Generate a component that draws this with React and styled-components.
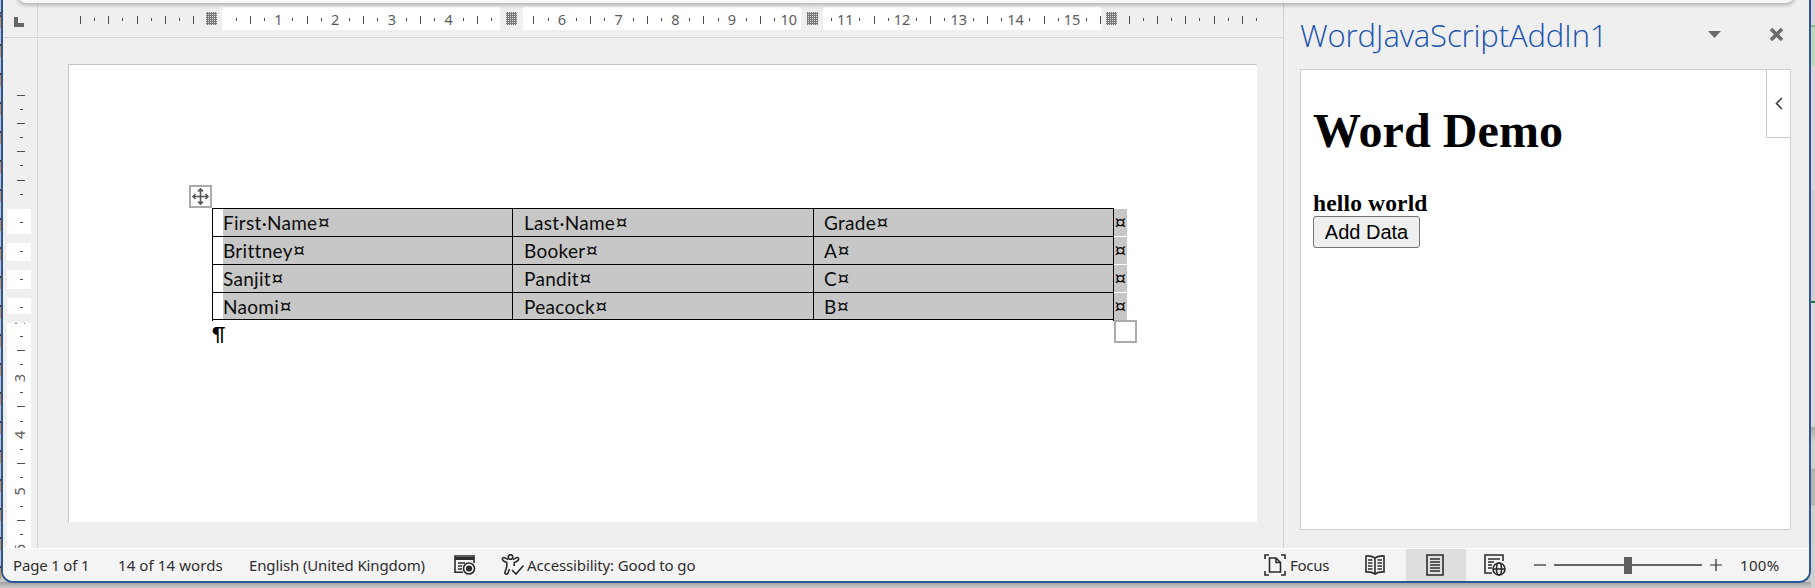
import React from 'react';
import styled, { createGlobalStyle } from 'styled-components';

const Global = createGlobalStyle`
  * { box-sizing: border-box; }
  body { margin: 0; width: 1815px; height: 588px; overflow: hidden; background: #b9b9b9; }
`;
const ui = `'Noto Sans', 'Open Sans', sans-serif`;

const Desktop = styled.div`
  width: 1815px; height: 588px; display: flex; align-items: flex-start; overflow: hidden;
  background: linear-gradient(#9d9d9d, #c4c4c4 5px) bottom / 100% 6px no-repeat, #c9c9c9;
`;
const LeftEdge = styled.div`
  width: 1px; height: 583px; flex: none;
  background: repeating-linear-gradient(#4a3b3b 0 2px, #c69158 2px 13px, #c2c2c8 13px 29px);
  background-position: 0 15px;
`;
const RightEdge = styled.div`
  width: 4px; height: 588px; flex: none;
  background: linear-gradient(#d7d5da 0 25px, #8fb596 25px 27px, #bcd5bf 27px 66px, #d8d6dc 66px 190px, #d0ced4 190px 301px, #217346 301px 303px, #dad8de 303px 426px, #aaa 428px, #d2d2d2 442px 468px, #b5b5b8 469px 505px, #d0d0d0 506px);
`;
const Window = styled.div`
  width: 1810px; height: 593px; flex: none; margin-top: -10px; padding-top: 10px;
  border: 2px solid #2b579a; border-top: 0; border-radius: 0 0 12px 12px; overflow: hidden;
  background: #efefef; display: flex; flex-direction: column; position: relative;
`;
const Ribbon = styled.div`
  position: absolute; z-index: 3; left: 14px; top: 2px; width: 1778px; height: 11px;
  background: #f8f8f8; border-radius: 0 0 9px 9px; box-shadow: 0 2px 4px rgba(0,0,0,.28);
`;
const Main = styled.div`display: flex; height: 548px; flex: none;`;
const Editor = styled.div`width: 1281px; display: flex; flex-direction: column; border-right: 1px solid #d2d2d2;`;
const RulerRow = styled.div`display: flex; height: 38px; border-bottom: 1px solid #d4d4d4; flex: none;`;
const TabStop = styled.div`
  width: 35px; height: 36px; border-right: 1px solid #d8d8d8; padding: 17px 0 0 11px; flex: none;
  svg { display: block; }
`;
const Ruler = styled.svg`display: block; flex: none; text { font: 14.5px ${ui}; fill: #5c5c5c; text-anchor: middle; }`;
const Body = styled.div`display: flex; height: 510px;`;
const VRulerBox = styled.div`width: 35px; border-right: 1px solid #d8d8d8; flex: none;`;
const Canvas = styled.div`flex: 1; padding: 26px 0 0 30px;`;
const Page = styled.div`
  width: 1189px; height: 458px; background: #fff; border-top: 1px solid #c3c3c3; border-left: 1px solid #c3c3c3;
  padding: 143px 0 0 143px; position: relative;
`;
const TableWrap = styled.div`display: flex; font-family: Lato, sans-serif; font-size: 19px; color: #0c0c0c;`;
const Table = styled.div`width: 902px; border: 1px solid #000; border-bottom: 0;`;
const Row = styled.div`display: flex; height: ${p => (p.$last ? 27 : 28)}px; border-bottom: 1px solid #000; line-height: 27px;`;
const Cell = styled.div`
  background: #c7c7c7; height: 100%; white-space: nowrap;
  width: ${p => p.$w}px; padding-left: ${p => p.$pad}px;
  border-left: ${p => (p.$first ? '10px solid #fff' : '1px solid #000')};
  letter-spacing: .3px;
`;
const Mark = styled.span`font-size: 22px; line-height: 20px; letter-spacing: 0;`;
const EndMarks = styled.div`padding-top: 1px;`;
const EndMark = styled.div`width: 13px; height: 27px; margin-bottom: 1px; background: #c7c7c7; line-height: 27px;`;
const Pilcrow = styled.div`font: 500 19px/24px Lato, sans-serif; color: #000; margin-top: 1px;`;
const MoveHandle = styled.div`
  position: absolute; left: 120px; top: 120px; width: 23px; height: 23px; border: 2px solid #ababab; background: #fff;
  svg { display: block; }
`;
const SizeHandle = styled.div`position: absolute; left: 1045px; top: 255px; width: 23px; height: 23px; border: 2px solid #ababab; background: #fff;`;

const Pane = styled.div`flex: 1; padding: 0 18px 0 16px; display: flex; flex-direction: column;`;
const PaneHead = styled.div`height: 69px; display: flex; align-items: center;`;
const PaneTitle = styled.div`font: 300 31px/40px 'Open Sans', sans-serif; color: #1a54b0; width: 410px; letter-spacing: -.12px; white-space: nowrap;`;
const HeadIcon = styled.svg`display: block; margin-left: ${p => p.$gap || 0}px; flex: none;`;
const Frame = styled.div`height: 461px; width: 491px; border: 1px solid #d0d0d0; background: #fff; position: relative; padding: 33px 0 0 12px; font-family: 'Liberation Serif', serif; color: #000;`;
const Heading = styled.h1`margin: 0; font-size: 48px; line-height: 56px; letter-spacing: .1px;`;
const Hello = styled.div`font-weight: bold; font-size: 23.5px; line-height: 28px; margin-top: 30px; letter-spacing: .15px;`;
const AddButton = styled.button`
  display: block; width: 107px; height: 32px; margin-top: -1px; border: 1px solid #767676; border-radius: 3px; background: #efefef;
  font: 20px 'Liberation Sans', sans-serif; color: #000; padding: 0; white-space: nowrap;
`;
const Collapse = styled.div`position: absolute; right: 0; top: 0; width: 24px; height: 68px; border-left: 1px solid #c8c8c8; border-bottom: 1px solid #c8c8c8; display: flex; align-items: center; justify-content: center;`;

const Status = styled.div`
  height: 33px; border-top: 1px solid #fff; background: #f4f4f4; display: flex; align-items: center; flex: none;
  font: 15px/30px ${ui}; color: #2e2e2e; padding-left: 10px;
`;
const Item = styled.div`width: ${p => p.$w}px; letter-spacing: ${p => p.$ls || 0}px; white-space: nowrap; flex: none;`;
const Icon = styled.svg`display: block; flex: none; margin-right: ${p => p.$gap || 0}px; fill: none; stroke: #2c2c2c; stroke-width: ${p => p.$sw || 1.6};`;
const Active = styled.div`width: 60px; height: 32px; background: #dedede; display: flex; align-items: center; padding-left: 20px; margin-right: 18px; flex: none;`;
const Track = styled.div`width: 148px; height: 2px; background: #666; margin: 0 8px; display: flex; align-items: center; justify-content: center; flex: none;`;
const Thumb = styled.div`width: 8px; height: 17px; background: #606060;`;

const STEP = 14.172;
const hatches = [206, 506, 807, 1106];
function HRuler() {
  const ticks = [];
  for (let k = -10; k <= 73; k++) {
    const isNum = k > 0 && k % 4 === 0 && k < 64;
    if (isNum || [-1, 0, 20, 21, 41, 42].includes(k)) continue;
    const tall = k % 2 === 0;
    ticks.push(<rect key={k} x={Math.round(221.6 + k * STEP) - 38} y={tall ? 16 : 18} width="1" height={tall ? 8 : 3} fill="#4c4c4c" />);
  }
  return (
    <Ruler width="1243" height="37">
      <defs><pattern id="hatch" width="2" height="2" patternUnits="userSpaceOnUse"><rect width="2" height="2" fill="#777" /><rect width="1" height="1" fill="#ddd" /></pattern></defs>
      {[[222, 500], [523, 801], [823, 1101]].map(([a, b]) => <rect key={a} x={a - 38} y="7" width={b - a} height="23" fill="#fff" />)}
      {ticks}
      {hatches.map(x => <rect key={x} x={x - 38} y="12" width="11" height="13" fill="url(#hatch)" />)}
      {[1, 2, 3, 4, 6, 7, 8, 9, 10, 11, 12, 13, 14, 15].map(n => <text key={n} x={221.8 + n * STEP * 4 - 38} y="24.500">{n}</text>)}
    </Ruler>
  );
}
function VRuler() {
  const ticks = [];
  for (let k = -8; k <= 23; k++) {
    if ([0, 2, 4, 6, 8, 12, 16, 20].includes(k)) continue;
    const tall = k % 2 === 0;
    ticks.push(<rect key={k} x={tall ? 14 : 17} y={Math.round(208 + k * STEP) - 38} width={tall ? 8 : 3} height="1" fill="#4c4c4c" />);
  }
  return (
    <Ruler width="34" height="510">
      {[[209, 234], [243, 261], [270, 289], [298, 314], [323, 548]].map(([a, b]) => <rect key={a} x="4" y={a - 38} width="24" height={b - a} fill="#fff" />)}
      {ticks}
      {[3, 4, 5, 6].map(n => <text key={n} transform={`translate(22 ${208 + n * STEP * 4 - 38}) rotate(-90)`}>{n}</text>)}
      <path d="M12 285.500h2M21 285.500h1" stroke="#777" />
    </Ruler>
  );
}

const rows = [
  ['First·Name', 'Last·Name', 'Grade'],
  ['Brittney', 'Booker', 'A'],
  ['Sanjit', 'Pandit', 'C'],
  ['Naomi', 'Peacock', 'B'],
];
const columns = [{ w: 299, pad: 0 }, { w: 301, pad: 11 }, { w: 300, pad: 10 }];

export default function App() {
  return (
    <>
      <Global />
      <Desktop>
        <LeftEdge />
        <Window>
          <Ribbon />
          <Main>
            <Editor>
              <RulerRow>
                <TabStop><svg width="11" height="10"><path d="M0 0h4v6h6v4H0z" fill="#666" /></svg></TabStop>
                <HRuler />
              </RulerRow>
              <Body>
                <VRulerBox><VRuler /></VRulerBox>
                <Canvas>
                  <Page>
                    <TableWrap>
                      <Table>
                        {rows.map((r, i) => (
                          <Row key={i} $last={i === 3}>
                            {r.map((t, j) => (
                              <Cell key={t} $first={j === 0} $w={columns[j].w} $pad={columns[j].pad}>{t}<Mark>¤</Mark></Cell>
                            ))}
                          </Row>
                        ))}
                      </Table>
                      <EndMarks>{rows.map((r, i) => <EndMark key={i}><Mark>¤</Mark></EndMark>)}</EndMarks>
                    </TableWrap>
                    <Pilcrow>¶</Pilcrow>
                    <MoveHandle><svg width="19" height="19" fill="none" stroke="#555" strokeWidth="1.6"><path d="M9.500 2v15M2 9.500h15M7 4.500l2.500-2.500 2.500 2.500M7 14.500l2.500 2.500 2.500-2.500M4.500 7L2 9.500l2.500 2.500M14.500 7l2.500 2.500-2.500 2.500" /></svg></MoveHandle>
                    <SizeHandle />
                  </Page>
                </Canvas>
              </Body>
            </Editor>
            <Pane>
              <PaneHead>
                <PaneTitle>WordJavaScriptAddIn1</PaneTitle>
                <HeadIcon width="13" height="7" $gap={-2}><path d="M0 0h13L6.500 7z" fill="#6b6b6b" /></HeadIcon>
                <HeadIcon width="15" height="15" $gap={48}><path d="M2 2l11 11M13 2L2 13" stroke="#6b6b6b" strokeWidth="3.600" /></HeadIcon>
              </PaneHead>
              <Frame>
                <Heading>Word Demo</Heading>
                <Hello>hello world</Hello>
                <AddButton>Add Data</AddButton>
                <Collapse><svg width="8" height="13"><path d="M7 1L1.500 6.500 7 12" fill="none" stroke="#444" strokeWidth="1.600" /></svg></Collapse>
              </Frame>
            </Pane>
          </Main>
          <Status>
            <Item $w={105} $ls={-0.18}>Page 1 of 1</Item>
            <Item $w={131} $ls={0.1}>14 of 14 words</Item>
            <Item $w={205} $ls={-0.13}>English (United Kingdom)</Item>
            <Icon width="22" height="20" $gap={25}><path d="M9 17.200H1V1h19v7" /><path d="M1 3.500h19" strokeWidth="3" /><path d="M4 8h7M4 11h4M4 14h4" /><circle cx="15" cy="13.500" r="5.500" /><circle cx="15" cy="13.500" r="2.300" fill="#2c2c2c" /></Icon>
            <Icon width="24" height="22" $gap={2}><circle cx="9.500" cy="3" r="2.300" /><path d="M7 5.500C4.500 4.500 3 2.500 1.700 4S3 8 5.800 8.500v4L3.800 19q1.500 2.500 3.200 0l1.500-4M12 5.500c2.500-1 4-3 5.300-1.500S16 8 13.200 8.500V12M11 16l4 4 7.500-8.500" /></Icon>
            <Item $w={737} $ls={-0.12}>Accessibility: Good to go</Item>
            <Icon width="22" height="22" $gap={4}><path d="M5 1H1v4M17 1h4v4M1 17v4h4M21 17v4h-4M5.500 4H12l4.500 4.500V18h-11zM12 4v4.500h4.500" /></Icon>
            <Item $w={75} $ls={-0.25}>Focus</Item>
            <Icon width="20" height="20" $gap={21}><path d="M10 3Q6 .5 1 1v16q5-.5 9 2 4-2.500 9-2V1q-5-.5-9 2zV19M3 5h4.500M3 8h4.500M3 11h4.500M3 14h4.500M12.500 5H17M12.500 8H17M12.500 11H17M12.500 14H17" /></Icon>
            <Active><Icon width="18" height="22"><path d="M1 1h16v20H1zM4 5h10M4 8h10M4 11h10M4 14h10M4 17h10" /></Icon></Active>
            <Icon width="22" height="22" $gap={28}><path d="M8 19H1V1h18v6M4 5h12M4 8h6M4 11h4M4 14h4" /><circle cx="15" cy="15" r="6" /><ellipse cx="15" cy="15" rx="2.500" ry="6" /><path d="M9 15h12" /></Icon>
            <Icon width="12" height="12" $sw={1.2}><path d="M0 6h12" /></Icon>
            <Track><Thumb /></Track>
            <Icon width="12" height="12" $gap={18} $sw={1.2}><path d="M0 6h12M6 0v12" /></Icon>
            <Item $w={50} $ls={0.3}>100%</Item>
          </Status>
        </Window>
        <RightEdge />
      </Desktop>
    </>
  );
}
